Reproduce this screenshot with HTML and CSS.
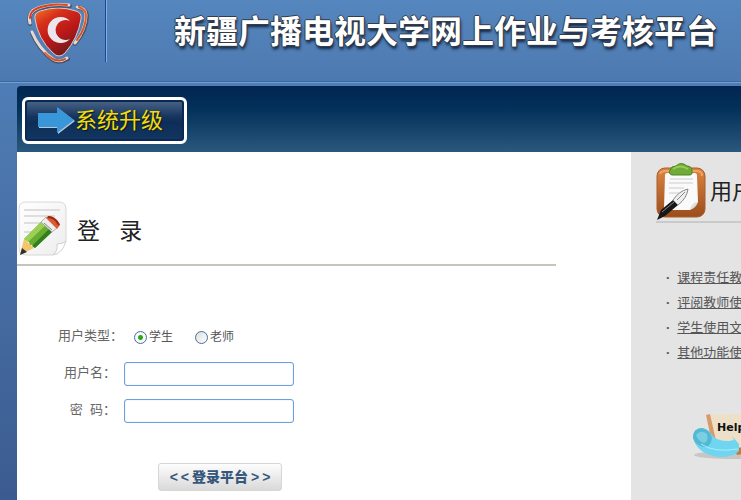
FILE: index.html
```html
<!DOCTYPE html>
<html lang="zh-CN">
<head>
<meta charset="utf-8">
<title>新疆广播电视大学网上作业与考核平台</title>
<link rel="stylesheet" href="styles.css">
</head>
<body>
<header class="banner">
  <svg class="logo" width="62" height="66" viewBox="0 0 62 66" aria-hidden="true">
    <defs>
      <linearGradient id="shield" x1="0" y1="0" x2=".6" y2="1">
        <stop offset="0" stop-color="#f07a28"/><stop offset=".3" stop-color="#d8301b"/><stop offset=".65" stop-color="#b91818"/><stop offset="1" stop-color="#701a1c"/>
      </linearGradient>
      <linearGradient id="rim" x1="0" y1="0" x2="1" y2="1">
        <stop offset="0" stop-color="#d8341e"/><stop offset=".6" stop-color="#e9622c"/><stop offset="1" stop-color="#b02818"/>
      </linearGradient>
    </defs>
    <path d="M13 11Q31 5 49 11Q55 13 54 19Q51 38 38 53Q32 59 26 53Q11 39 8 19Q7 13 13 11Z" fill="url(#shield)" stroke="#dccbc6"/>
    <g fill="none" stroke-linecap="round">
      <path d="M3 24Q0 12 11 9Q24 4 43 6M50 7Q60 9 60 16Q60 30 48 44M5 33Q12 50 26 60Q32 64 41 59" stroke="#49546a" stroke-width="4"/>
      <path d="M3 23Q0 12 11 8Q24 3 42 5M50 7Q59 8 59 15Q59 29 48 43M5 32Q12 49 26 59Q32 63 40 58" stroke="#e6d8d0" stroke-width="3"/>
      <path d="M3 18Q3 11 11 8Q24 3 40 5M52 7Q59 10 59 15Q59 28 50 40M18 53Q29 64 38 59" stroke="url(#rim)" stroke-width="2"/>
    </g>
    <path d="M43 21A13 13 0 1 0 43 39A10 10 0 1 1 43 21Z" fill="#e9e7eb"/>
  </svg>
  <span class="divider"></span>
  <h1>新疆广播电视大学网上作业与考核平台</h1>
</header>
<div class="page">
  <nav class="toolbar">
    <a class="upgrade" href="#">
      <svg width="37" height="28" viewBox="0 0 37 28" aria-hidden="true">
        <path d="M1 7H20V1L37 14L20 27V21H1Z" fill="#b9c6d4"/>
        <path d="M0 6H19V0L36 13L19 26V20H0Z" fill="#3996d8"/>
      </svg>
      <span>系统升级</span>
    </a>
  </nav>
  <div class="columns">
    <main class="login">
      <div class="heading">
        <svg width="50" height="56" viewBox="0 0 50 56" aria-hidden="true">
          <defs>
            <linearGradient id="paper" x1="0" y1="0" x2="1" y2="1"><stop offset="0" stop-color="#fff"/><stop offset="1" stop-color="#ededed"/></linearGradient>
          </defs>
          <path d="M9 1H42Q49 1 49 8V40L36 54H9Q2 54 2 47V8Q2 1 9 1Z" fill="url(#paper)" stroke="#d8d8d8"/>
          <path d="M49 40Q46 43 40 43Q41 50 36 54Q45 53 49 40Z" fill="#fff" stroke="#d0d0d0"/>
          <path d="M7 9H43M7 15H38M7 22H25M7 31H18" stroke="#d5d5d5" stroke-width="1.5"/>
          <path d="M3 54L7 38L17 47Z" fill="#f4c66c"/>
          <path d="M3 54L5 47L10 51Z" fill="#303030"/>
          <path d="M7 38L24 21L35 31L18 47Q16 43 13 44Q12 39 7 38Z" fill="#69ad2e"/>
          <path d="M7 38L24 21L28 25L11 41Z" fill="#9bcf55"/>
          <path d="M15 45L32 28L35 31L18 47Z" fill="#347d1f"/>
          <path d="M24 21L29 16L40 27L35 31Z" fill="#eee" stroke="#999" stroke-width=".7"/>
          <path d="M27 22L35 29" stroke="#888" stroke-width="1"/>
          <path d="M29 17L31 15Q38 15 42 22L43 24L40 28Z" fill="#d85b32"/>
          <path d="M31 16Q38 16 42 24" fill="none" stroke="#9e2418" stroke-width="2"/>
        </svg>
        <h2>登&nbsp;&nbsp;&nbsp;录</h2>
      </div>
      <form class="form">
        <div class="row">
          <span class="label" id="type-label">用户类型：</span>
          <div class="choices" role="radiogroup" aria-labelledby="type-label">
            <label><input type="radio" name="type" checked>学生</label>
            <label><input type="radio" name="type">老师</label>
          </div>
        </div>
        <div class="row">
          <label class="label inner" for="user">用户名：</label>
          <input class="field" type="text" id="user">
        </div>
        <div class="row">
          <label class="label inner" for="password">密&nbsp;&nbsp;码：</label>
          <input class="field" type="password" id="password">
        </div>
        <button class="submit" type="submit"><span>&lt;</span><span>&lt;</span><b>登录平台</b><span>&gt;</span><span>&gt;</span></button>
      </form>
    </main>
    <aside class="guide">
      <div class="guide-head">
        <svg width="50" height="58" viewBox="0 0 50 58" aria-hidden="true">
          <defs>
            <linearGradient id="board" x1="0" y1="0" x2="0" y2="1"><stop offset="0" stop-color="#dc8541"/><stop offset="1" stop-color="#9b4d1d"/></linearGradient>
          </defs>
          <rect x="1" y="6" width="48" height="49" rx="8" fill="url(#board)" stroke="#a95e2b"/>
          <path d="M4 12Q5 9 9 9H41Q46 9 46 14" fill="none" stroke="#efa264" stroke-width="2"/>
          <path d="M11 11H39Q41 11 41 14L42 40L34 48H10Q8 48 8 46L9 13Q9 11 11 11Z" fill="#fafafa"/>
          <path d="M42 40Q36 40 34 48Q40 46 42 40Z" fill="#ddd"/>
          <path d="M14 17H37M13 21H37M13 26H28M13 31H23" stroke="#ccc"/>
          <path d="M16 13Q12 12 14 8Q15 4 20 4Q25-1 31 4Q36 4 36 9Q37 13 33 13Z" fill="#6fab38" stroke="#4e8420"/>
          <path d="M17 7Q24 2 32 7" fill="none" stroke="#9bcd56" stroke-width="2"/>
          <path d="M1 58L5 48L17 38L22 43L9 54Z" fill="#171717"/>
          <path d="M17 38Q23 29 32 27Q31 36 22 43Z" fill="#eee" stroke="#888"/>
          <path d="M6 50L18 40M21 38L29 30" stroke="#888"/>
        </svg>
        <h2>用户</h2>
      </div>
      <ul class="links">
        <li><a href="#">课程责任教</a></li>
        <li><a href="#">评阅教师使</a></li>
        <li><a href="#">学生使用文</a></li>
        <li><a href="#">其他功能使</a></li>
      </ul>
      <div class="help">
        <svg width="49" height="50" viewBox="0 0 49 50" role="img" aria-label="Help">
          <ellipse cx="40" cy="42" rx="38" ry="4" fill="#c6c6c6"/>
          <path d="M15 2L80 0V40L25 35Z" fill="#eee0c8"/>
          <path d="M14 2L18 1L25 32L20 30Z" fill="#d89a69"/>
          <path d="M42 36L80 27V36L45 42Z" fill="#c97a36"/>
          <path d="M1 25Q1 15 10 15Q17 16 20 22Q24 28 37 28L42 27L40 23L47 31V38Q42 44 27 44Q5 41 1 25Z" fill="#6fd5f0"/>
          <path d="M1 25Q1 15 10 15Q18 17 20 25Q19 34 12 34Q4 33 1 25Z" fill="#52b9d2"/>
          <path d="M4 22Q9 16 15 21Q17 28 12 30Q6 28 4 22Z" fill="#7acfe2"/>
          <path d="M9 31Q22 40 46 36" fill="none" stroke="#a9eefb"/>
          <text x="25" y="18">Help</text>
        </svg>
      </div>
    </aside>
  </div>
</div>
</body>
</html>
```
FILE: styles.css
```css
* { box-sizing: border-box; }
body {
  margin: 0;
  min-height: 100vh;
  display: flex;
  flex-direction: column;
  overflow-x: hidden;
  background: linear-gradient(#4f7db5 80px, #3b5b90);
  color: #666;
  font: 13px/20px "Liberation Sans", "Noto Sans CJK SC", sans-serif;
}
h1, h2, ul { margin: 0; padding: 0; font-weight: 400; }
.banner {
  display: flex;
  align-items: flex-start;
  height: 83px;
  padding-left: 27px;
  background: linear-gradient(#5586be, #4d79b0);
  border-bottom: 1px solid #6fa0cf;
  box-shadow: inset 0 -1px #3a679f;
  white-space: nowrap;
}
.divider {
  flex: none;
  width: 2px;
  height: 62px;
  margin: 0 67px 0 16px;
  background: linear-gradient(90deg, #1f43a0 50%, #83aede 50%);
}
.logo { flex: none; }
h1 {
  padding-top: 8px;
  font-size: 32px;
  line-height: 48px;
  font-weight: 700;
  color: #fff;
  text-shadow: 1px 0 #333c48, -1px 0 #333c48, 0 1px #333c48, 0 -1px #333c48, 1px 3px 3px #10233f;
}
.page {
  flex: 1;
  display: flex;
  flex-direction: column;
  margin: 3px 0 0 17px;
}
.toolbar {
  padding: 11px 5px 8px;
  background: linear-gradient(#012551, #02315a 35%, #2b587c);
  border-radius: 4px 0 0 0;
}
.upgrade {
  display: flex;
  align-items: center;
  width: 165px;
  height: 47px;
  padding-left: 13px;
  border: 3px solid #fff;
  border-radius: 6px;
  background: linear-gradient(#4d6689, #16365f 40%, #0d2d57 55%, #123762);
  box-shadow: inset 0 0 0 2px #0b2852;
  color: #f2dc0a;
  font-size: 22px;
  line-height: 32px;
  text-decoration: none;
  white-space: nowrap;
  text-shadow: 1px 1px 1px #10151c;
}
.columns {
  flex: 1;
  display: grid;
  grid-template-columns: minmax(0, 1fr) 110px;
}
.login { padding-top: 49px; background: #fff; }
.heading {
  display: flex;
  gap: 10px;
  height: 65px;
  margin-right: 75px;
  border-bottom: 2px solid #c6c5b8;
}
h2 {
  padding-top: 13px;
  font-size: 23px;
  line-height: 34px;
  color: #222;
  white-space: nowrap;
}
.form { padding-top: 59px; }
.row {
  display: flex;
  align-items: center;
  height: 24px;
  margin-bottom: 13px;
}
.label {
  width: 107px;
  padding: 0 0 3px 41px;
  white-space: nowrap;
}
.inner { padding: 0 8px 3px 0; text-align: right; }
.choices { display: flex; gap: 22px; padding-left: 10px; }
.choices label {
  display: flex;
  align-items: center;
  gap: 2px;
  font-size: 12px;
  color: #555;
}
.choices input {
  appearance: none;
  width: 13px;
  height: 13px;
  margin: 0;
  border: 1px solid #44719b;
  border-radius: 50%;
  background: linear-gradient(135deg, #ddd, #fff);
}
.choices input:checked { background: radial-gradient(circle, #2ca51f 2px, #f8f8f8 3px); }
.field {
  width: 170px;
  height: 24px;
  border: 1px solid #6c9fdd;
  border-radius: 3px;
  background: #fff;
  box-shadow: inset 0 0 1px #8ab5ec;
}
.submit {
  display: flex;
  align-items: center;
  justify-content: center;
  gap: 3px;
  width: 124px;
  height: 28px;
  margin: 40px 0 9px 141px;
  padding: 0;
  border: 1px solid #d6d6d6;
  border-radius: 3px;
  background: linear-gradient(#fdfdfd, #d9d9d9);
  color: #36577b;
  font: bold 14px/20px "Liberation Sans", "Noto Sans CJK SC", sans-serif;
}
.guide {
  padding: 10px 0 0 25px;
  overflow: hidden;
  background: #e4e4e4;
  white-space: nowrap;
}
.guide-head {
  display: flex;
  gap: 4px;
  height: 61px;
  border-bottom: 2px solid #cacaca;
}
.guide-head svg, .heading svg { flex: none; }
.guide-head h2 { font-size: 22px; }
.links {
  padding: 42px 0 0 10px;
  list-style: none;
  line-height: 25px;
}
.links li { display: flex; gap: 7px; }
.links li::before { content: "·"; font-weight: bold; color: #555; }
.links a { color: #555; text-decoration: underline; }
.help { padding: 48px 0 0 36px; }
.help svg { display: block; }
.help text { font: 900 11px "DejaVu Sans", sans-serif; fill: #111; }
```
